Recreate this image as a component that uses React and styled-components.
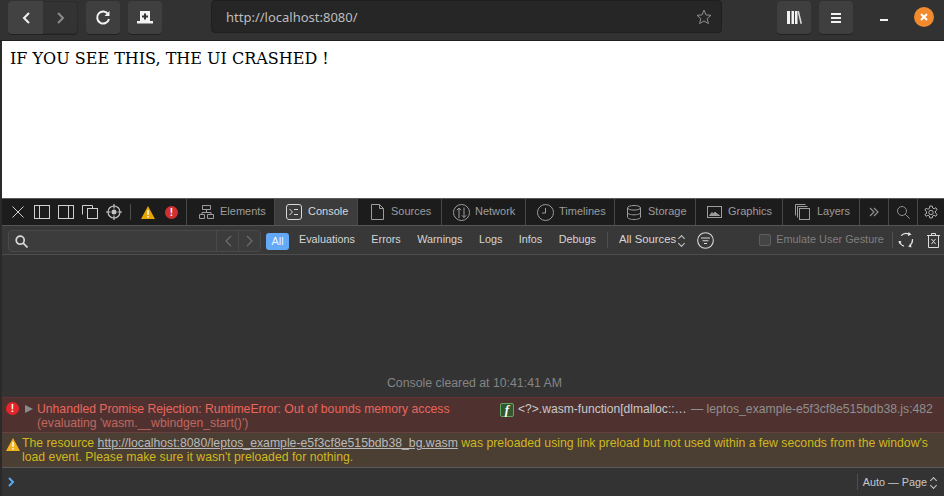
import React from 'react';
import styled, { createGlobalStyle } from 'styled-components';

const GlobalStyle = createGlobalStyle`
  html, body { margin: 0; padding: 0; height: 100%; overflow: hidden; background: #2a2a2a; }
  #root { height: 100%; }
`;

const Icon = ({ w = 16, h = 16, children, color = 'currentColor', sw = 1 }) => (
  <svg width={w} height={h} viewBox={`0 0 ${w} ${h}`} fill="none" stroke={color} strokeWidth={sw} style={{ display: 'block', flex: 'none' }}>
    {children}
  </svg>
);

const tabs = [
  { name: 'Elements', width: 88, gap: 6, left: 12, icon: (
    <Icon w={15} h={14}><path d="M3.500.5h8v4h-8zM.5 9.500h5v4h-5zM8.500 9.500h6v4h-6zM7.500 4.500v3M3 9.500v-2h9v2" /></Icon>
  ) },
  { name: 'Console', width: 83, active: true, gap: 6, left: 11, icon: (
    <Icon w={16} h={16}><rect x=".5" y=".5" width="15" height="15" rx="2.500" /><path d="M3.500 5l3 3-3 3M8 5.500h4M8 10.500h4" /></Icon>
  ) },
  { name: 'Sources', width: 84, gap: 7, left: 13, icon: (
    <Icon w={13} h={16}><path d="M.5.5h8l4 4v11H.5zM8.500.5v4h4" /></Icon>
  ) },
  { name: 'Network', width: 84, gap: 5, left: 11, icon: (
    <Icon w={17} h={17}><circle cx="8.500" cy="8.500" r="8" /><path d="M6 14V4M3.800 6.200L6 4l2.200 2.200M11 3.500v10M8.800 11.300l2.200 2.200 2.200-2.200" /></Icon>
  ) },
  { name: 'Timelines', width: 89, gap: 5, left: 11, icon: (
    <Icon w={17} h={17}><circle cx="8.500" cy="8.500" r="8" /><path d="M8.500 4v5H5" /></Icon>
  ) },
  { name: 'Storage', width: 81, gap: 7, left: 12, icon: (
    <Icon w={14} h={15}><ellipse cx="7" cy="2.800" rx="6.500" ry="2.300" /><path d="M.5 2.800v9.400c0 1.300 2.900 2.300 6.500 2.300s6.500-1 6.500-2.300V2.800M.5 7.500c0 1.300 2.900 2.300 6.500 2.300s6.500-1 6.500-2.300" /></Icon>
  ) },
  { name: 'Graphics', width: 87, gap: 6, left: 11, icon: (
    <Icon w={15} h={12}><rect x=".5" y=".5" width="14" height="11" /><path d="M2.500 9.500l2.500-3 1.500 1.500 1.500-2 2 2 1 .5 1.500 1z" fill="currentColor" /></Icon>
  ) },
  { name: 'Layers', width: 77, gap: 7, left: 12, icon: (
    <Icon w={15} h={16}><path d="M.5 11.500V.5h10M2.500 13.500V2.500h10" /><rect x="4.500" y="4.500" width="10" height="11" /></Icon>
  ) },
];

const filters = ['Evaluations', 'Errors', 'Warnings', 'Logs', 'Infos', 'Debugs'];

export default function App() {
  return (
    <Page>
      <GlobalStyle />
      <BrowserBar>
        <ButtonGroup>
          <NavButton $hover>
            <Icon w={10} h={14} color="#f2f2f2" sw={2}><path d="M8 2L3 7l5 5" /></Icon>
          </NavButton>
          <NavButton>
            <Icon w={10} h={14} color="#8a8a8a" sw={2}><path d="M2 2l5 5-5 5" /></Icon>
          </NavButton>
        </ButtonGroup>
        <ToolButton>
          <Icon w={16} h={16} color="#f2f2f2" sw={2}><path d="M13.200 4.200A6 6 0 1 0 14 9" /><path d="M14.500 1v5h-5z" fill="#f2f2f2" stroke="none" /></Icon>
        </ToolButton>
        <ToolButton $ml={8}>
          <svg width="16" height="13" viewBox="0 0 16 13" style={{ display: 'block' }}>
            <path d="M3 0h10v10h3v2.500H0V10h3z" fill="#f2f2f2" />
            <path d="M7 2.500h2v2h2v2H9v2H7v-2H5v-2h2z" fill="#333" />
          </svg>
        </ToolButton>
        <UrlBar>
          <UrlText>http://localhost:8080/</UrlText>
          <Icon w={16} h={16} color="#8e8e8e"><path d="M8 1.200l2 4.700 5 .4-3.800 3.300 1.200 4.900L8 12l-4.400 2.500 1.200-4.900L1 6.300l5-.4z" /></Icon>
        </UrlBar>
        <ToolButton $ml={55}>
          <svg width="15" height="13" viewBox="0 0 15 13" style={{ display: 'block' }}>
            <path d="M0 0h3v13H0zM4.500 0h2.500v13H4.500zM8 0h2.500v13H8z" fill="#f2f2f2" />
            <path d="M10.500.3l1.500-.3 3 12.400-1.500.6z" fill="#d8d8d8" />
          </svg>
        </ToolButton>
        <ToolButton $ml={8}>
          <svg width="10" height="10" viewBox="0 0 10 10" style={{ display: 'block' }}>
            <path d="M0 0h10v2H0zM0 4h10v2H0zM0 8h10v2H0z" fill="#f2f2f2" />
          </svg>
        </ToolButton>
        <Minimize />
        <CloseDot>
          <svg width="8" height="8" viewBox="0 0 8 8" style={{ display: 'block' }}>
            <path d="M1 1l6 6M7 1L1 7" stroke="#fff" strokeWidth="2" />
          </svg>
        </CloseDot>
      </BrowserBar>

      <Viewport>IF YOU SEE THIS, THE UI CRASHED !</Viewport>

      <DevTools>
        <TabBar>
          <LeftTools>
            <Icon w={14} h={12} color="#d0d0d0"><path d="M.5.500l11 11M11.500.500l-11 11" /></Icon>
            <Icon w={16} h={14} color="#d0d0d0"><rect x=".5" y=".5" width="15" height="13" /><path d="M5.500.5v13" /></Icon>
            <Icon w={16} h={14} color="#d0d0d0"><rect x=".5" y=".5" width="15" height="13" /><path d="M10.500.5v13" /></Icon>
            <Icon w={16} h={14} color="#d0d0d0"><path d="M.5 9.500V.5h10v3" /><rect x="5.500" y="3.500" width="10" height="10" /></Icon>
            <Icon w={16} h={16} color="#c4c4c4" sw={1.200}><circle cx="8" cy="8" r="6" /><circle cx="8" cy="8" r="2.500" fill="#c4c4c4" stroke="none" /><path d="M8 0v4.500M8 11.500V16M0 8h4.500M11.500 8H16" /></Icon>
            <ToolDivider />
            <svg width="14" height="13" viewBox="0 0 14 13" style={{ display: 'block' }}>
              <path d="M7 0l7 13H0z" fill="#e6a500" />
              <path d="M6.300 4h1.400v5H6.300zM6.300 10h1.400v1.400H6.300z" fill="#fff" />
            </svg>
            <ErrorDot $size={13} $ml={2} $bg="#cf3131">!</ErrorDot>
          </LeftTools>
          {tabs.map((tab) => (
            <Tab key={tab.name} $width={tab.width} $active={tab.active} $left={tab.left} $gap={tab.gap}>
              {tab.icon}
              <TabLabel>{tab.name}</TabLabel>
            </Tab>
          ))}
          <IconTab $width={29}>
            <Icon w={10} h={10} color="#8f8f8f" sw={1.200}><path d="M1 1l4 4-4 4M5 1l4 4-4 4" /></Icon>
          </IconTab>
          <IconTab $width={29}>
            <Icon w={13} h={13} color="#8f8f8f"><circle cx="5" cy="5" r="4.500" /><path d="M8.300 8.300l4.400 4.400" /></Icon>
          </IconTab>
          <IconTab $width={26} $noBorder>
            <Icon w={14} h={15} color="#b0b0b0"><path d="M5.800 1h2.400l.4 2 1.500.7 1.800-1 1.200 2-1.600 1.300v2l1.600 1.300-1.200 2-1.800-1-1.500.7-.4 2H5.800l-.4-2-1.500-.7-1.800 1-1.200-2L2.500 8.500v-2L.9 5.200l1.200-2 1.800 1 1.500-.7z" /><circle cx="7" cy="7.500" r="2.200" /></Icon>
          </IconTab>
        </TabBar>

        <FilterBar>
          <SearchBox>
            <SearchField>
              <Icon w={13} h={13} color="#d8d8d8" sw={1.700}><circle cx="5.200" cy="5.200" r="4" /><path d="M8.200 8.200l4.300 4.300" /></Icon>
            </SearchField>
            <SearchStep>
              <Icon w={8} h={12} color="#6b6b6b" sw={1.300}><path d="M7 1L2 6l5 5" /></Icon>
            </SearchStep>
            <SearchStep>
              <Icon w={8} h={12} color="#6b6b6b" sw={1.300}><path d="M1 1l5 5-5 5" /></Icon>
            </SearchStep>
          </SearchBox>
          <AllPill>All</AllPill>
          {filters.map((f) => <FilterItem key={f}>{f}</FilterItem>)}
          <BarDivider $ml={11} />
          <SourcesSelect>All Sources</SourcesSelect>
          <UpDown $ml={2} $mr={12} />
          <Icon w={17} h={17} color="#d8d8d8" sw={1.100}><circle cx="8.500" cy="8.500" r="7.800" /><path d="M4 6h9M5.500 8.800h6M7 11.500h3" /></Icon>
          <GestureBox />
          <GestureLabel>Emulate User Gesture</GestureLabel>
          <BarDivider $ml={8} />
          <IconSlot $ml={5}>
            <Icon w={16} h={16} color="#e4e4e4" sw={1.300}>
              <path d="M3.200 3.600A6.500 6.500 0 0 1 11 2.200M14.400 7.200A6.500 6.500 0 0 1 11.500 13.500M6 14.200A6.500 6.500 0 0 1 1.600 9" />
              <path d="M10.500 0l3 2.600-3.600 1.400zM13 12l.4 3.600-3.300-1.200zM.2 9.600l3.200-.6-1.300 3.500z" fill="#e4e4e4" stroke="none" />
            </Icon>
          </IconSlot>
          <IconSlot $ml={13}>
            <Icon w={13} h={15} color="#dcdcdc"><path d="M0 2.500h13M4.500 2.500V.5h4v2M1.500 2.500v12h10v-12M4.500 6l4 5M8.500 6l-4 5" /></Icon>
          </IconSlot>
        </FilterBar>

        <LogArea>
          <ClearedNote>Console cleared at 10:41:41 AM</ClearedNote>
        </LogArea>

        <ErrorRow>
          <ErrorDot $size={13} $bg="#e4262c">!</ErrorDot>
          <Disclosure />
          <ErrorText>
            Unhandled Promise Rejection: RuntimeError: Out of bounds memory access
            <ErrorCode>(evaluating 'wasm.__wbindgen_start()')</ErrorCode>
          </ErrorText>
          <FrameBadge>f</FrameBadge>
          <FrameName>&lt;?&gt;.wasm-function[dlmalloc::…</FrameName>
          <FrameSource>— leptos_example-e5f3cf8e515bdb38.js:482</FrameSource>
        </ErrorRow>

        <WarnRow>
          <WarnIcon>
            <svg width="14" height="13" viewBox="0 0 14 13" style={{ display: 'block' }}>
              <path d="M7 0l7 13H0z" fill="#f2b21f" />
              <path d="M6.300 4h1.400v5H6.300zM6.300 10h1.400v1.400H6.300z" fill="#fff" />
            </svg>
          </WarnIcon>
          <WarnText>
            The resource <WarnLink>http://localhost:8080/leptos_example-e5f3cf8e515bdb38_bg.wasm</WarnLink> was preloaded using link preload but not used within a few seconds from the window's load event. Please make sure it wasn't preloaded for nothing.
          </WarnText>
        </WarnRow>

        <PromptRow>
          <Icon w={7} h={10} color="#5aa9f5" sw={2}><path d="M1 1l4 4-4 4" /></Icon>
          <PromptSpacer />
          <BarDivider />
          <PageSelect>Auto — Page</PageSelect>
          <UpDown $ml={3} $mr={7} />
        </PromptRow>
      </DevTools>
    </Page>
  );
}

const Page = styled.div`
  width: 944px;
  height: 496px;
  display: flex;
  flex-direction: column;
  overflow: hidden;
  font-family: "Liberation Sans", Arial, sans-serif;
`;

const BrowserBar = styled.div`
  height: 40px;
  flex: none;
  display: flex;
  align-items: flex-start;
  padding-left: 8px;
  background: #323232;
  border-bottom: 1px solid #1e1e1e;
`;

const ButtonGroup = styled.div`
  display: flex;
  flex: none;
  height: 33px;
  margin-top: 1px;
  width: 70px;
  border-radius: 4px;
  overflow: hidden;
  background: #333;
  box-shadow: inset 0 0 0 1px #2b2b2b, 0 1px 0 #222;
  margin-right: 8px;
`;

const NavButton = styled.div`
  width: 35px;
  display: flex;
  align-items: center;
  justify-content: center;
  background: ${(p) => (p.$hover ? '#424242' : 'transparent')};
`;

const ToolButton = styled.div`
  width: 34px;
  height: 33px;
  margin-top: 1px;
  margin-left: ${(p) => p.$ml || 0}px;
  flex: none;
  display: flex;
  align-items: center;
  justify-content: center;
  background: #3f3f3f;
  border-radius: 4px;
  box-shadow: 0 1px 0 #222;
`;

const UrlBar = styled.div`
  width: 511px;
  height: 33px;
  margin: 0 0 0 49px;
  padding: 0 9px 0 14px;
  box-sizing: border-box;
  flex: none;
  display: flex;
  align-items: center;
  justify-content: space-between;
  background: #262626;
  border: 1px solid #1f1f1f;
  border-radius: 4px;
`;

const UrlText = styled.span`
  font-family: "Noto Sans", sans-serif;
  font-size: 13px;
  color: #bdbdbd;
`;

const Minimize = styled.div`
  width: 8px;
  height: 2px;
  margin: 19px 0 0 27px;
  background: #f2f2f2;
  flex: none;
`;

const CloseDot = styled.div`
  width: 20px;
  height: 20px;
  margin: 7px 0 0 26px;
  flex: none;
  border-radius: 50%;
  background: #f28a2e;
  display: flex;
  align-items: center;
  justify-content: center;
`;

const Viewport = styled.div`
  height: 157px;
  flex: none;
  margin-left: 2px;
  padding: 8px 8px 0;
  box-sizing: border-box;
  background: #fff;
  color: #000;
  font-family: "DejaVu Serif", serif;
  font-size: 16px;
  line-height: 19px;
`;

const DevTools = styled.div`
  flex: 1;
  min-height: 0;
  margin-left: 2px;
  display: flex;
  flex-direction: column;
  background: #333;
  font-size: 11px;
`;

const TabBar = styled.div`
  height: 26px;
  flex: none;
  display: flex;
  background: #1c1c1c;
  border-top: 1px solid #5a5a5a;
  border-bottom: 1px solid #555;
`;

const LeftTools = styled.div`
  width: 185px;
  flex: none;
  padding-left: 10px;
  box-sizing: border-box;
  display: flex;
  align-items: center;
  gap: 8px;
  border-right: 1px solid #484848;
`;

const ToolDivider = styled.div`
  width: 1px;
  height: 16px;
  background: #4e4e4e;
  margin-right: 2px;
`;

const Tab = styled.div`
  width: ${(p) => p.$width}px;
  flex: none;
  box-sizing: border-box;
  padding-left: ${(p) => p.$left}px;
  display: flex;
  align-items: center;
  gap: ${(p) => p.$gap}px;
  color: ${(p) => (p.$active ? '#d8d8d8' : '#9d9d9d')};
  background: ${(p) => (p.$active ? '#3c3c3c' : 'transparent')};
  border-right: 1px solid #484848;
`;

const TabLabel = styled.span`
  font-size: 11px;
  position: relative;
  top: -1px;
`;

const IconTab = styled.div`
  width: ${(p) => p.$width}px;
  flex: none;
  box-sizing: border-box;
  display: flex;
  align-items: center;
  justify-content: center;
  border-right: ${(p) => (p.$noBorder ? 'none' : '1px solid #484848')};
`;

const FilterBar = styled.div`
  height: 28px;
  flex: none;
  display: flex;
  align-items: center;
  padding-left: 6px;
  background: #383838;
  border-bottom: 1px solid #4d4d4d;
  color: #d4d4d4;
`;

const SearchBox = styled.div`
  width: 253px;
  height: 22px;
  margin-top: 2px;
  flex: none;
  display: flex;
  border: 1px solid #4a4a4a;
  border-radius: 4px;
  box-sizing: border-box;
  background: #3c3c3c;
`;

const SearchField = styled.div`
  flex: 1;
  display: flex;
  align-items: center;
  padding-left: 6px;
`;

const SearchStep = styled.div`
  width: 21px;
  display: flex;
  align-items: center;
  justify-content: center;
  border-left: 1px solid #4a4a4a;
`;

const AllPill = styled.div`
  margin: 2px -6.500px 0 5px;
  height: 17px;
  width: 23px;
  flex: none;
  border-radius: 3px;
  background: #63a9f7;
  color: #eaf3ff;
  display: flex;
  align-items: center;
  justify-content: center;
  font-size: 11px;
`;

const FilterItem = styled.span`
  margin: 0 0 2px 16.500px;
  flex: none;
  font-size: 10.800px;
  color: #d6d6d6;
`;

const BarDivider = styled.div`
  width: 1px;
  height: 16px;
  margin-left: ${(p) => p.$ml || 0}px;
  background: #4f4f4f;
  flex: none;
`;

const SourcesSelect = styled.span`
  margin: 0 0 2px 11px;
  font-size: 11.300px;
  color: #d6d6d6;
  flex: none;
`;

const UpDown = styled.span`
  width: 7px;
  height: 11px;
  margin: 0 ${(p) => p.$mr}px 0 ${(p) => p.$ml}px;
  flex: none;
  position: relative;
  &::before, &::after {
    content: '';
    position: absolute;
    left: 1px;
    width: 4px;
    height: 4px;
    border-left: 1px solid #c8c8c8;
    border-top: 1px solid #c8c8c8;
    transform: rotate(45deg);
    top: 1px;
  }
  &::after {
    transform: rotate(225deg);
    top: 6px;
  }
`;

const GestureBox = styled.span`
  width: 10px;
  height: 10px;
  margin-left: 45px;
  flex: none;
  border: 1px solid #5e5e5e;
  border-radius: 2px;
  background: #444;
`;

const GestureLabel = styled.span`
  margin: 0 0 2px 5px;
  font-size: 10.900px;
  color: #7f7f7f;
  flex: none;
`;

const IconSlot = styled.span`
  margin-left: ${(p) => p.$ml}px;
  flex: none;
`;

const LogArea = styled.div`
  flex: 1;
  min-height: 0;
  display: flex;
  align-items: flex-end;
  justify-content: center;
  padding: 0 0 7px 3px;
`;

const ClearedNote = styled.div`
  font-size: 12.300px;
  color: #858585;
`;

const ErrorRow = styled.div`
  height: 36px;
  flex: none;
  display: flex;
  align-items: flex-start;
  padding: 4px 0 0 4px;
  box-sizing: border-box;
  background: #4f3230;
  border-top: 1px solid #633;
  border-bottom: 1px solid #664140;
`;

const ErrorDot = styled.span`
  width: ${(p) => p.$size}px;
  height: ${(p) => p.$size}px;
  margin-left: ${(p) => p.$ml || 0}px;
  flex: none;
  border-radius: 50%;
  background: ${(p) => p.$bg};
  color: #fff;
  font-size: 10px;
  font-weight: bold;
  line-height: 13px;
  text-align: center;
`;

const Disclosure = styled.span`
  width: 0;
  height: 0;
  margin: 3px 4px 0 6px;
  flex: none;
  border-left: 8px solid #8a8a8a;
  border-top: 4px solid transparent;
  border-bottom: 4px solid transparent;
`;

const ErrorText = styled.div`
  width: 455px;
  flex: none;
  font-size: 12.200px;
  line-height: 14px;
  color: #e8665c;
`;

const ErrorCode = styled.span`
  display: block;
  color: #c0675f;
`;

const FrameBadge = styled.span`
  width: 14px;
  height: 14px;
  flex: none;
  box-sizing: border-box;
  border: 1px solid #63a65e;
  border-radius: 2px;
  background: #33562f;
  color: #fff;
  font-family: "Liberation Serif", serif;
  font-style: italic;
  font-weight: bold;
  font-size: 13px;
  line-height: 12px;
  text-align: center;
  margin-left: 8px;
  margin-top: 1px;
`;

const FrameName = styled.span`
  width: 173px;
  margin-left: 4px;
  flex: none;
  white-space: nowrap;
  font-size: 12.100px;
  line-height: 14px;
  color: #c9c9c9;
`;

const FrameSource = styled.span`
  flex: none;
  white-space: nowrap;
  font-size: 12.200px;
  line-height: 14px;
  color: #8f8f8f;
`;

const WarnRow = styled.div`
  height: 35px;
  flex: none;
  display: flex;
  align-items: flex-start;
  padding: 3px 14px 0 4px;
  box-sizing: border-box;
  background: #4b3e33;
  border-bottom: 1px solid #5a5a5a;
`;

const WarnIcon = styled.span`
  flex: none;
  margin: 2px 2px 0 0;
`;

const WarnText = styled.div`
  font-size: 12.250px;
  line-height: 14px;
  color: #cfb81f;
`;

const WarnLink = styled.span`
  color: #b9b9b9;
  text-decoration: underline;
`;

const PromptRow = styled.div`
  height: 28px;
  flex: none;
  display: flex;
  align-items: center;
  padding-left: 6px;
`;

const PromptSpacer = styled.div`
  flex: 1;
`;

const PageSelect = styled.span`
  margin-left: 5px;
  font-size: 10.800px;
  color: #c8c8c8;
`;
